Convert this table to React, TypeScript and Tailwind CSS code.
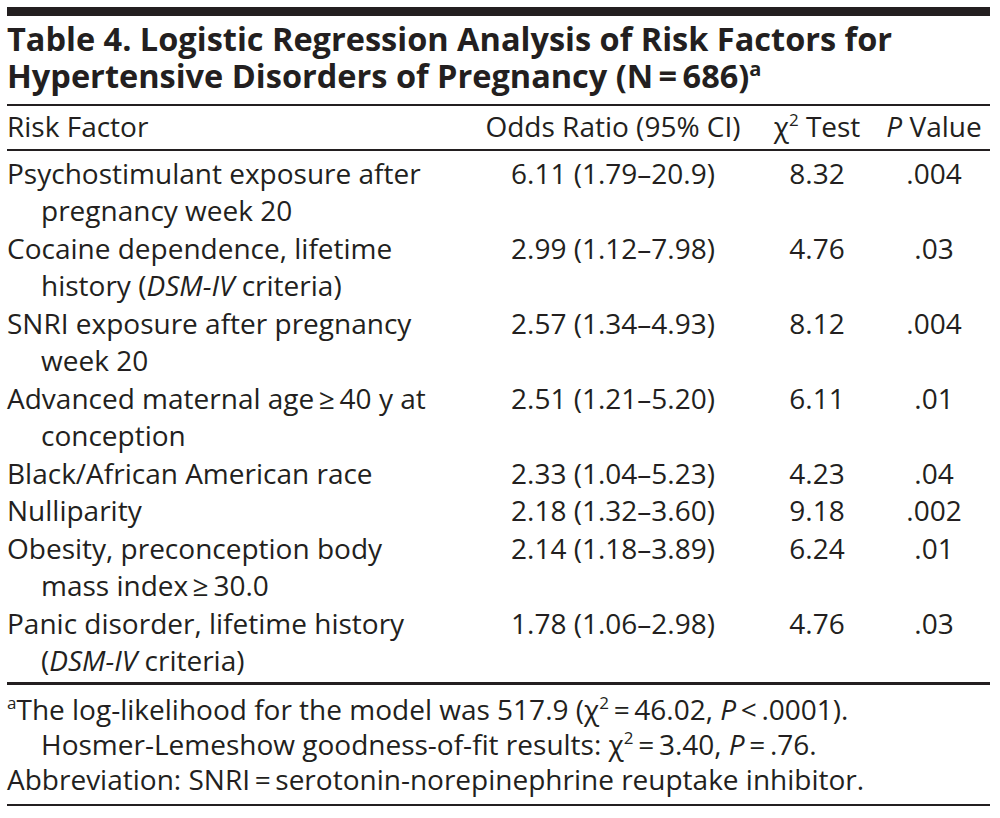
import React from 'react';

type Row = {
  factor: React.ReactNode[];
  odds: string;
  chi: string;
  p: string;
};

const dsm = <i>DSM-IV</i>;

const rows: Row[] = [
  { factor: ['Psychostimulant exposure after', 'pregnancy week 20'], odds: '6.11 (1.79–20.9)', chi: '8.32', p: '.004' },
  { factor: ['Cocaine dependence, lifetime', <>history ({dsm} criteria)</>], odds: '2.99 (1.12–7.98)', chi: '4.76', p: '.03' },
  { factor: ['SNRI exposure after pregnancy', 'week 20'], odds: '2.57 (1.34–4.93)', chi: '8.12', p: '.004' },
  { factor: ['Advanced maternal age\u2009≥\u200940 y at', 'conception'], odds: '2.51 (1.21–5.20)', chi: '6.11', p: '.01' },
  { factor: ['Black/African American race'], odds: '2.33 (1.04–5.23)', chi: '4.23', p: '.04' },
  { factor: ['Nulliparity'], odds: '2.18 (1.32–3.60)', chi: '9.18', p: '.002' },
  { factor: ['Obesity, preconception body', 'mass index\u2009≥\u200930.0'], odds: '2.14 (1.18–3.89)', chi: '6.24', p: '.01' },
  { factor: ['Panic disorder, lifetime history', <>({dsm} criteria)</>], odds: '1.78 (1.06–2.98)', chi: '4.76', p: '.03' },
];

const grid = 'grid grid-cols-[463px_286px_122px_112px]';
const eq = '\u2009=\u2009';

export default function App() {
  return (
    <div className="w-[1000px] h-[818px] bg-white text-[#231f20] font-['Open_Sans',sans-serif]">
      <div className="ml-[7px] w-[983px] pt-[7px] flex flex-col">
        {/* Heavy top rule */}
        <div className="h-[9px] bg-[#231f20]" />

        {/* Title */}
        <h1 className="mt-[4px] text-[32.5px] leading-[37px] font-bold">
          Table 4. Logistic Regression Analysis of Risk Factors for
          <br />
          Hypertensive Disorders of Pregnancy (N{eq}686)
          <sup className="text-[20px] font-bold -top-[0.6em]">a</sup>
        </h1>
        <div className="mt-[10px] h-[2px] bg-[#231f20]" />

        {/* Column headings */}
        <div className={`${grid} mt-[1.5px] text-[28px] leading-[37px]`}>
          <div>Risk Factor</div>
          <div className="text-center">Odds Ratio (95% CI)</div>
          <div className="text-center">
            χ<sup className="text-[17px] -top-[0.6em]">2</sup> Test
          </div>
          <div className="text-center">
            <i>P</i> Value
          </div>
        </div>
        <div className="mt-[4.5px] h-[1.5px] bg-[#231f20]" />

        {/* Body */}
        <div className="mt-[4px] flex flex-col text-[28px] leading-[37.5px]">
          {rows.map((r, i) => (
            <div key={i} className={grid}>
              <div className="flex flex-col">
                {r.factor.map((line, j) => (
                  <span key={j} className={j > 0 ? 'pl-[34px]' : ''}>
                    {line}
                  </span>
                ))}
              </div>
              <div className="text-center">{r.odds}</div>
              <div className="text-center">{r.chi}</div>
              <div className="text-center">{r.p}</div>
            </div>
          ))}
        </div>
        <div className="mt-[2.5px] h-[2.5px] bg-[#231f20]" />

        {/* Footnotes */}
        <div className="mt-[7px] flex flex-col text-[28px] leading-[35px]">
          <p>
            <sup className="text-[17px] -top-[0.6em]">a</sup>The log-likelihood for the model was 517.9 (χ
            <sup className="text-[17px] -top-[0.6em]">2</sup>
            {eq}46.02, <i>P</i>
            {'\u2009'}&lt;{'\u2009'}.0001).
          </p>
          <p className="pl-[34px]">
            Hosmer-Lemeshow goodness-of-fit results: χ<sup className="text-[17px] -top-[0.6em]">2</sup>
            {eq}3.40, <i>P</i>
            {eq}.76.
          </p>
          <p>Abbreviation: SNRI{eq}serotonin-norepinephrine reuptake inhibitor.</p>
        </div>
        <div className="mt-[7px] h-[2.5px] bg-[#231f20]" />
      </div>
    </div>
  );
}
